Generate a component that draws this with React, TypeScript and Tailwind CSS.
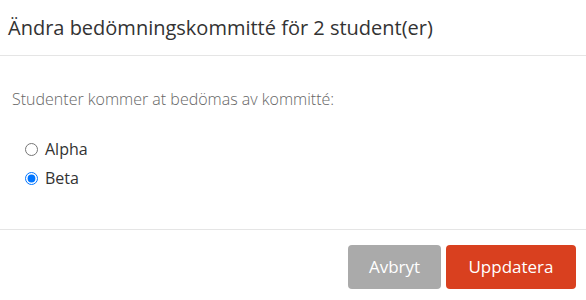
import React, { useState } from 'react';

const committees = ['Alpha', 'Beta'];

export default function App() {
  const [selected, setSelected] = useState('Beta');

  return (
    <div className="w-[586px] h-[300px] bg-white flex flex-col text-[#333]" style={{ fontFamily: '"Open Sans", sans-serif' }}>
      <div className="h-[56px] px-2 flex items-center border-b border-[#e5e5e5]">
        <h2 className="text-[20px] leading-none font-normal">Ändra bedömningskommitté för 2 student(er)</h2>
      </div>

      <div className="flex-1 px-3 pt-[33px]">
        <p className="text-[16px] leading-5 text-[#666] font-light">Studenter kommer at bedömas av kommitté:</p>
        <div className="mt-[30px] pl-[13px] flex flex-col gap-[9px]">
          {committees.map((c) => (
            <label key={c} className="flex items-center gap-[7px] text-[16px] leading-5 text-[#333]">
              <input
                type="radio"
                name="committee"
                checked={selected === c}
                onChange={() => setSelected(c)}
                className="w-[13px] h-[13px] m-0 accent-[#0075ff]"
              />
              {c}
            </label>
          ))}
        </div>
      </div>

      <div className="h-[71px] border-t border-[#e5e5e5] flex justify-end items-start pt-[15px] pr-[10px] gap-[5px]">
        <button className="h-[44px] w-[93px] rounded-[4px] bg-[#aaaaaa] text-white text-[17px]">Avbryt</button>
        <button className="h-[44px] w-[130px] rounded-[4px] bg-[#d9401f] text-white text-[17px]">Uppdatera</button>
      </div>
    </div>
  );
}
